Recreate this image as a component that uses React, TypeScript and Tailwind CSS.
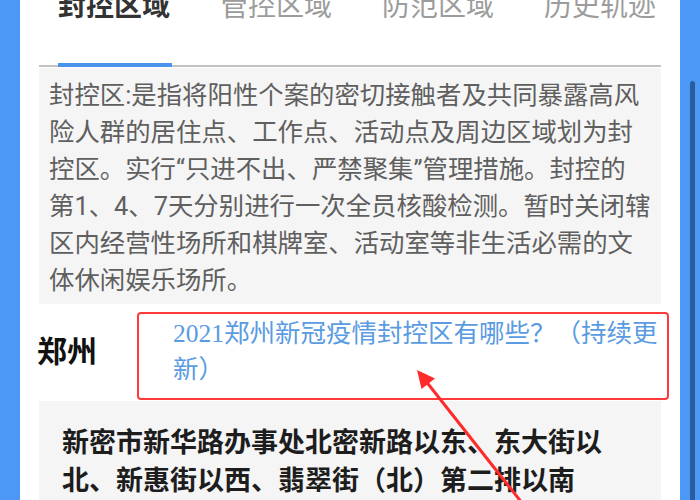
import React from "react";

const sans = { fontFamily: 'Roboto, "Noto Sans CJK SC", sans-serif' };
const serifMix = { fontFamily: '"Liberation Serif", "Noto Sans CJK SC", serif' };

export default function App() {
  const tabs = ["封控区域", "管控区域", "防范区域", "历史轨迹"];
  const para = [
    "封控区:是指将阳性个案的密切接触者及共同暴露高风",
    "险人群的居住点、工作点、活动点及周边区域划为封",
    "控区。实行“只进不出、严禁聚集”管理措施。封控的",
    "第1、4、7天分别进行一次全员核酸检测。暂时关闭辖",
    "区内经营性场所和棋牌室、活动室等非生活必需的文",
    "体休闲娱乐场所。",
  ];
  return (
    <div
      className="relative w-[700px] h-[500px] overflow-hidden flex bg-white"
      style={sans}
    >
      <div className="w-[20px] h-full bg-[#4b98f6]" />
      <div className="w-[660px] h-full bg-white pl-[19px] pr-[19px] flex flex-col">
        <div className="flex gap-[50px] pl-[19px] mt-[-7px] h-[28px] leading-[28px] text-[28px] whitespace-nowrap">
          {tabs.map((t, i) => (
            <div
              key={t}
              className={
                i === 0 ? "font-bold text-[#333333]" : "text-[#9c9c9c]"
              }
            >
              {t}
            </div>
          ))}
        </div>
        <div className="mt-[44px] relative h-[2px] bg-[#c2c2c2]">
          <div className="absolute left-[19px] top-[-2px] w-[114px] h-[4px] bg-[#4a93ec]" />
        </div>
        <div className="mt-[1px] h-[242px] bg-[#f5f5f5] pl-[10px] pt-[9px] text-[25.4px] leading-[37px] text-[#5f5f5f]">
          {para.map((l) => (
            <div key={l} className="whitespace-nowrap h-[37px]">
              {l}
            </div>
          ))}
        </div>
        <div className="h-[100px] flex items-center">
          <div className="w-[136px] -ml-[2px] text-[30px] font-bold text-[#111111] leading-[36px]">
            郑州
          </div>
          <div
            className="text-[25.5px] leading-[36px] text-[#5a9be2] whitespace-nowrap"
            style={serifMix}
          >
            <div className="h-[36px]">2021郑州新冠疫情封控区有哪些？（持续更</div>
            <div className="h-[36px]">新）</div>
          </div>
        </div>
        <div className="flex-1 bg-[#f5f5f5] pl-[23px] pt-[23px] text-[27px] font-bold leading-[38px] text-[#1d1d1d]">
          <div className="whitespace-nowrap h-[38px]">新密市新华路办事处北密新路以东、东大街以</div>
          <div className="whitespace-nowrap h-[38px]">北、新惠街以西、翡翠街（北）第二排以南</div>
        </div>
      </div>
      <div className="w-[20px] h-full bg-[#4b98f6] flex flex-col pt-[81px] pl-[10px]">
        <div className="w-[5px] flex-1 bg-[#2b5c9e] rounded-t-full" />
      </div>

      {/* annotation box */}
      <div className="absolute left-[137px] top-[312px] w-[532px] h-[88px] border-2 border-[#ff3b3b] rounded-[4px]" />
      {/* annotation arrow */}
      <svg
        className="absolute left-0 top-0"
        width="700"
        height="500"
        viewBox="0 0 700 500"
      >
        <line
          x1="425"
          y1="380"
          x2="526"
          y2="508"
          stroke="#ff2b2b"
          strokeWidth="3"
        />
        <polygon points="417,370 421.5,389 435,378.5" fill="#ff2b2b" />
      </svg>
    </div>
  );
}
